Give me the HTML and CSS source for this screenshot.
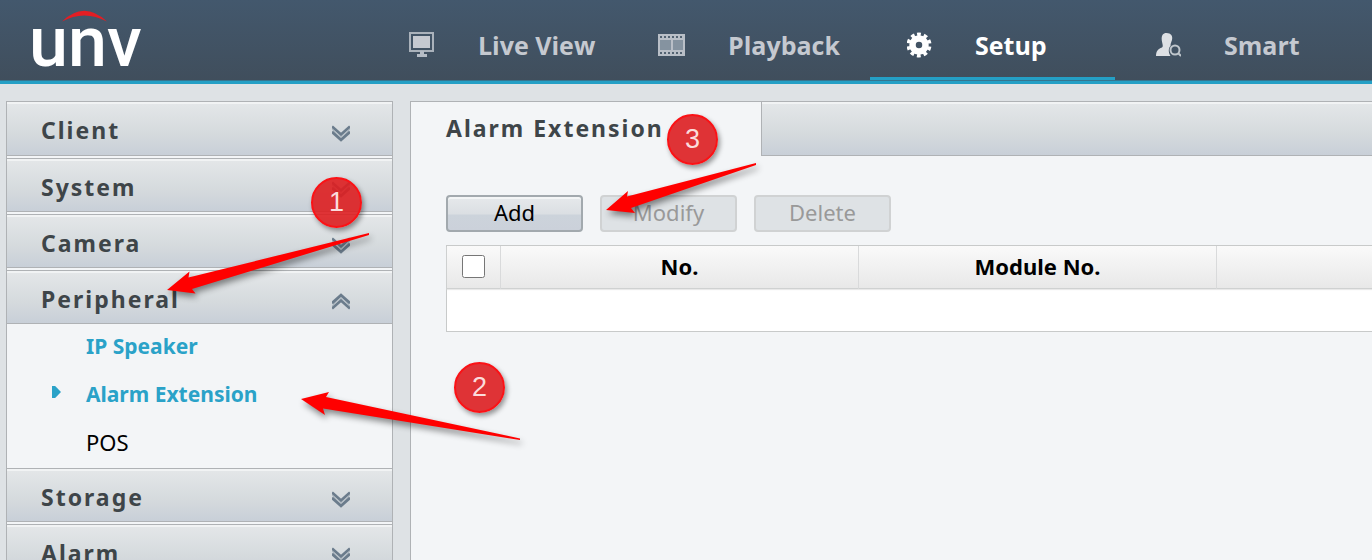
FILE: index.html
```html
<!DOCTYPE html>
<html lang="en">
<head>
    <meta charset="UTF-8">
    <meta name="viewport" content="width=device-width, initial-scale=1.0">
    <title>Alarm Extension</title>
    <link rel="stylesheet" href="styles.css">
</head>
<body>
    <svg class="symbols" aria-hidden="true">
        <symbol id="chevrons" viewBox="0 0 18 17">
            <path d="M0 1.5 9 9.500 18 1.500M0 6.800 9 14.800 18 6.800" fill="none" stroke="#6b7c8c" stroke-width="2.800"/>
            <path d="M0 4.200 9 12.200 18 4.200" fill="none" stroke="#a9b4bd" stroke-width="1"/>
        </symbol>
    </svg>

    <header class="header">
        <a class="logo" href="#" aria-label="unv">
            <svg width="112" height="62" viewBox="0 0 112 62">
                <path d="M30 15.500Q52-6 75 15.500Q52 3.500 30 15.500Z" fill="#e31e24"/>
                <text class="logo-text" x="-3" y="60">unv</text>
            </svg>
        </a>
        <nav class="nav">
            <a class="nav-item" href="#">
                <svg width="26" height="26" viewBox="0 0 26 26">
                    <rect x="1" y="1" width="23" height="18" fill="none" stroke="#aab2bb" stroke-width="2"/>
                    <rect x="4" y="4" width="17" height="12" fill="#c5c9d0"/>
                    <path d="M11 19h4v3h3v3H8v-3h3z" fill="#b5bcc5"/>
                </svg>
                <span>Live View</span>
            </a>
            <a class="nav-item" href="#">
                <svg width="27" height="26" viewBox="0 0 27 26">
                    <rect y="2" width="27" height="22" fill="#b9bfc7"/>
                    <rect x="2" y="8" width="11" height="10" fill="#8593a0"/>
                    <rect x="15" y="8" width="10" height="10" fill="#8593a0"/>
                    <path d="M2 5h24M2 21h24" stroke="#536372" stroke-width="2" stroke-dasharray="2 2"/>
                </svg>
                <span>Playback</span>
            </a>
            <a class="nav-item active" href="#">
                <svg width="25" height="26" viewBox="-12 -13 25 26">
                    <circle r="6.500" fill="none" stroke="#fff" stroke-width="6.500"/>
                    <circle r="10.500" fill="none" stroke="#fff" stroke-width="4" stroke-dasharray="3.600 2.997" transform="rotate(-100)"/>
                </svg>
                <span>Setup</span>
            </a>
            <a class="nav-item" href="#">
                <svg width="25" height="26" viewBox="0 0 25 26">
                    <path d="M10.500 1C15 1 17 4 16 8c-.5 2-1.500 3-1.500 6-2 2-2.500 6 0 10H0c0-5 2-7 6-8.500 1.500-1 .5-3-.2-7C5.300 3 7 1 10.500 1z" fill="#dde0e4"/>
                    <circle cx="19" cy="18" r="4.500" fill="none" stroke="#bfc6cc" stroke-width="2"/>
                    <path d="M22 21l3 3" stroke="#bfc6cc" stroke-width="2"/>
                </svg>
                <span>Smart</span>
            </a>
        </nav>
    </header>

    <div class="content">
        <aside class="sidebar">
            <button class="menu-item" type="button">Client <svg class="arrow"><use href="#chevrons"/></svg></button>
            <button class="menu-item" type="button">System <svg class="arrow"><use href="#chevrons"/></svg></button>
            <button class="menu-item" type="button">Camera <svg class="arrow"><use href="#chevrons"/></svg></button>
            <button class="menu-item open" type="button" aria-expanded="true">Peripheral <svg class="arrow"><use href="#chevrons"/></svg></button>
            <div class="submenu">
                <a class="highlight" href="#">IP Speaker</a>
                <a class="highlight current" href="#">Alarm Extension</a>
                <a href="#">POS</a>
            </div>
            <button class="menu-item" type="button">Storage <svg class="arrow"><use href="#chevrons"/></svg></button>
            <button class="menu-item" type="button">Alarm <svg class="arrow"><use href="#chevrons"/></svg></button>
        </aside>

        <main class="main">
            <div class="tabs">
                <h1 class="tab">Alarm Extension</h1>
                <div class="tabs-rest"></div>
            </div>
            <div class="panel">
                <div class="toolbar">
                    <button class="btn" type="button">Add</button>
                    <button class="btn" type="button" disabled>Modify</button>
                    <button class="btn" type="button" disabled>Delete</button>
                </div>
                <table class="grid">
                    <thead>
                        <tr>
                            <th class="check"><input type="checkbox" aria-label="Select all"></th>
                            <th>No.</th>
                            <th>Module No.</th>
                            <th></th>
                        </tr>
                    </thead>
                    <tbody>
                        <tr><td colspan="4"></td></tr>
                    </tbody>
                </table>
            </div>
        </main>
    </div>

    <!-- step markers -->
    <svg class="pointers" width="800" height="460" viewBox="0 0 800 460" aria-hidden="true">
        <path d="M167 290 189.500 271.500 188.500 277.500 369 233V235L192 289 195.500 293.500Z"/>
        <path d="M301 399 329 392 326 397 520 438.500V440L323 408.500 325 415Z"/>
        <path d="M606 210 628 191 627 196.500 756 163V165L631 208 635 213Z"/>
    </svg>
    <span class="step step-1">1</span>
    <span class="step step-2">2</span>
    <span class="step step-3">3</span>
</body>
</html>
```
FILE: styles.css
```css
* {
    box-sizing: border-box;
}
body {
    margin: 0;
    height: 100vh;
    overflow: hidden;
    position: relative;
    display: flex;
    flex-direction: column;
    font-family: "Noto Sans", "Open Sans", sans-serif;
    font-size: 22px;
    color: #000;
    background: #dee2e5;
}
a {
    color: inherit;
    text-decoration: none;
}
button {
    font: inherit;
    cursor: pointer;
}
.symbols {
    position: absolute;
    width: 0;
    height: 0;
}

/* header */
.header {
    flex: none;
    display: flex;
    justify-content: space-between;
    height: 84px;
    padding: 0 8px 0 32px;
    background: linear-gradient(#43586d, #404e5c);
    border-bottom: 3px solid #249fc5;
    box-shadow: inset 0 -1px #35758f;
}
.logo {
    padding-top: 6px;
}
.logo svg {
    display: block;
    overflow: visible;
}
.logo-text {
    font-family: Roboto, sans-serif;
    font-size: 70px;
    font-weight: 500;
    fill: #fff;
}
.nav {
    display: flex;
    gap: 4px;
}
.nav-item {
    display: flex;
    align-items: center;
    gap: 43px;
    width: 245px;
    height: 80px;
    padding: 12px 0 0 37px;
    border-bottom: 3px solid transparent;
    color: #c5c9d0;
    font-family: "Open Sans", sans-serif;
    font-size: 25px;
    font-weight: 700;
    white-space: nowrap;
}
.nav-item svg {
    flex: none;
}
.nav-item.active {
    color: #fff;
    border-color: #249fc5;
}

/* layout */
.content {
    flex: 1;
    min-height: 0;
    display: flex;
    gap: 17px;
    padding: 17px 0 0 6px;
}
.sidebar {
    flex: none;
    width: 387px;
    border: 1px solid #afb2b5;
    border-width: 0 1px;
    background: #f3f5f7;
}
.menu-item {
    display: flex;
    align-items: center;
    justify-content: space-between;
    width: 100%;
    height: 54px;
    margin-bottom: 2px;
    padding: 3px 42px 0 34px;
    border: 1px solid #afb2b5;
    border-width: 1px 0;
    background: linear-gradient(#e4e7e9, #d5dadd 60%, #c8cfd8);
    box-shadow: inset 0 2px #f1f3f4;
    color: #3e4549;
    font-size: 23px;
    font-weight: 700;
    letter-spacing: 2px;
}
.menu-item:first-child {
    height: 55px;
}
.menu-item.open {
    margin-bottom: 0;
}
.arrow {
    width: 18px;
    height: 17px;
    margin-top: 6px;
}
.open .arrow {
    transform: rotate(180deg);
}
.submenu a {
    display: flex;
    align-items: center;
    height: 48px;
    padding: 0 0 4px 79px;
}
.submenu .highlight {
    color: #2aa2c8;
    font-size: 21px;
    font-weight: 700;
}
.submenu .current {
    padding-left: 45px;
    gap: 25px;
}
.current::before {
    content: "";
    width: 9px;
    height: 12px;
    margin-bottom: 4px;
    background: #2aa2c8;
    clip-path: polygon(0 0, 35% 0, 100% 50%, 35% 100%, 0 100%);
}

/* main panel */
.main {
    flex: 1;
    min-width: 0;
    overflow: hidden;
    border: 1px solid #afb2b5;
    border-width: 1px 0 0 1px;
    background: #f3f5f7;
}
.tabs {
    display: flex;
    height: 54px;
}
.tab {
    width: 350px;
    margin: 0;
    padding-left: 35px;
    color: #3e4549;
    font-size: 23px;
    font-weight: 700;
    line-height: 52px;
    letter-spacing: 2px;
    white-space: nowrap;
}
.tabs-rest {
    flex: 1;
    border: 1px solid #afb2b5;
    border-width: 0 0 1px 1px;
    background: linear-gradient(#e4e7e9, #d5dadd 60%, #c8cfd8);
    box-shadow: inset 0 2px #f1f3f4;
}
.panel {
    padding: 39px 0 0 35px;
}
.toolbar {
    display: flex;
    gap: 17px;
    margin-bottom: 13px;
}
.btn {
    width: 137px;
    height: 37px;
    padding: 0 0 3px;
    border: 2px solid #a2a9ae;
    border-radius: 4px;
    background: linear-gradient(#e6e9eb, #dbdfe3 50%, #ccd3db 56%, #cbd1da);
    box-shadow: inset 0 2px #f3f5f6;
    color: #000;
    line-height: 30px;
}
.btn:disabled {
    border-color: #d0d2d3;
    background: #dee2e5;
    box-shadow: none;
    color: #999;
}
.grid {
    width: 100%;
    min-width: 1130px;
    table-layout: fixed;
    border-collapse: separate;
    border-spacing: 0;
    border: 1px solid #c8caca;
    background: #fff;
}
.grid th {
    height: 43px;
    padding: 0 0 2px;
    border-right: 1px solid #d5d7d8;
    border-bottom: 1px solid #cfd1d1;
    background: linear-gradient(#fafafa, #e8e8e8);
    box-shadow: 0 1px 1px #e9e9e9;
}
.grid .check {
    width: 54px;
}
.grid td {
    height: 42px;
    padding: 0;
}
.check input {
    display: block;
    width: 23px;
    height: 23px;
    margin: 0 auto;
}

/* step markers */
.pointers {
    position: absolute;
    top: 0;
    left: 0;
    fill: #f00;
    filter: drop-shadow(2px 4px 3px rgba(0, 0, 0, 0.45));
    pointer-events: none;
}
.step {
    position: absolute;
    width: 51px;
    height: 51px;
    border: 2px solid #fb1216;
    border-radius: 50%;
    background: rgba(221, 30, 32, 0.9);
    box-shadow: 2px 3px 5px rgba(0, 0, 0, 0.4);
    color: #fbdcdc;
    font-family: "Liberation Sans", Arial, sans-serif;
    font-size: 27px;
    line-height: 46px;
    text-align: center;
}
.step-1 {
    top: 177px;
    left: 311px;
}
.step-2 {
    top: 362px;
    left: 454px;
}
.step-3 {
    top: 114px;
    left: 667px;
}
```
